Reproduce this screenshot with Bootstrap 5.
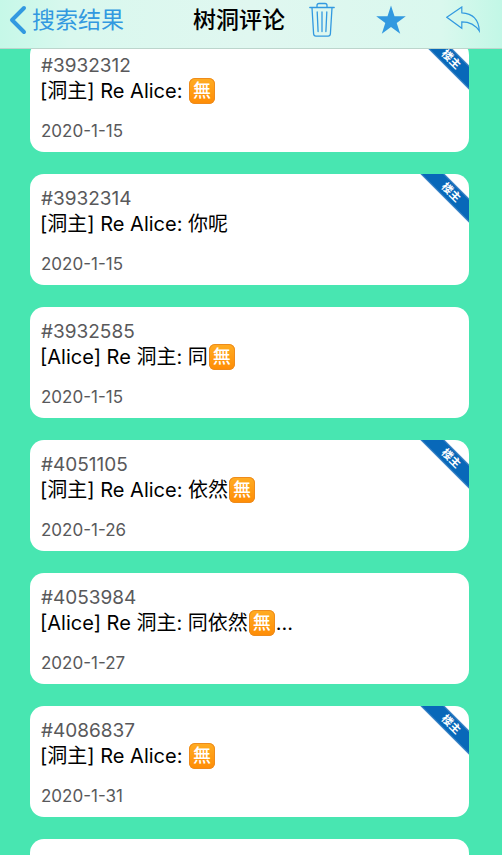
<!DOCTYPE html>
<html lang="zh-CN">
<head>
<meta charset="utf-8">
<meta name="viewport" content="width=device-width, initial-scale=1">
<title>树洞评论</title>
<link href="https://cdn.jsdelivr.net/npm/bootstrap@5.3.0/dist/css/bootstrap.min.css" rel="stylesheet">
<style>
  body { background: #48e6b1; color: #000; font-family: Inter, "Noto Sans CJK SC", sans-serif; }
  .topbar { height: 49px; padding-bottom: 9px; background: linear-gradient(90deg, #c6f8e8 0, #d9f8ee 14%, #e0f7f0 50%, #daf8ee 88%, #c2f7e6 100%); border-bottom: 1px solid #bcd5cc; }
  .topbar a, .topbar button { color: #3299e0; }
  .back { font-size: 23px; line-height: 32px; gap: 5px; padding-left: 9px; }
  .heading { font-size: 23px; line-height: 32px; font-weight: 500; color: #000; }
  .actions { width: 217px; padding: 0 22px 0 24px; }
  .feed { padding: 41px 33px 0 30px; gap: 22px; scrollbar-width: none; }
  .feed::-webkit-scrollbar { display: none; }
  .post { min-height: 111px; padding: 13px 11px 9px; border-radius: 14px; flex: none; }
  .number { font-size: 19px; line-height: 24px; color: #59595b; }
  .message { font-size: 20px; line-height: 26px; margin: 0 -1px 15px; }
  .date { font-size: 17px; line-height: 24px; color: #59595b; }
  .wu { width: 26px; height: 26px; margin: 0 1px; border-radius: 6px; font-size: 18px; font-weight: 500; line-height: 26px; color: #fff; background: linear-gradient(#ffad23, #ff8c05); box-shadow: inset 0 0 0 1px #ee8b1c; }
  .ribbon { top: 10px; right: -32px; width: 100px; height: 17px; transform: rotate(45deg); background: #0868b9; border: solid #4688c8; border-width: 1px 0; color: #fff; font-size: 11px; font-weight: 700; line-height: 15px; text-align: center; }
</style>
<script src="https://cdn.jsdelivr.net/npm/bootstrap@5.3.0/dist/js/bootstrap.bundle.min.js"></script>
</head>
<body>
<header class="topbar fixed-top d-flex align-items-center">
  <div class="flex-fill d-flex align-items-center justify-content-between">
    <a class="back d-flex align-items-center text-decoration-none" href="#results">
      <svg width="18" height="30" viewBox="0 0 18 30" fill="none" stroke="currentColor" stroke-width="4" stroke-linecap="round" stroke-linejoin="round" aria-hidden="true"><path d="M15 3 3 15l12 12"/></svg>
      <span>搜索结果</span>
    </a>
    <h1 class="heading m-0">树洞评论</h1>
  </div>
  <div class="actions d-flex align-items-center justify-content-between">
    <button class="btn p-0 border-0 d-flex" type="button" aria-label="删除">
      <svg width="26" height="36" viewBox="0 0 26 36" fill="none" stroke="currentColor" stroke-width="1.3" stroke-linejoin="round" stroke-linecap="round"><path d="M.8 5.5h24.4M8 5.2V3.6C8 2.2 8.700 1.500 10 1.500h6c1.300 0 2 .7 2 2.100v1.600M3 5.800l1.600 26c.1 1.500.9 2.300 2.300 2.300h12.200c1.400 0 2.200-.8 2.300-2.300l1.600-26M8.200 10l.9 19.500M13 10v19.500M17.800 10l-.9 19.500"/></svg>
    </button>
    <button class="btn p-0 border-0 d-flex" type="button" aria-label="收藏">
      <svg width="30" height="30" viewBox="0 0 30 30" fill="currentColor"><path d="m15 .5 3.500 10.700h11.300l-9.100 6.700 3.500 10.900L15 22.100l-9.200 6.700 3.500-10.900L.2 11.200h11.300z"/></svg>
    </button>
    <button class="btn p-0 border-0 d-flex" type="button" aria-label="回复">
      <svg width="34" height="27" viewBox="0 0 34 27" fill="none" stroke="currentColor" stroke-width="1.200" stroke-linejoin="miter"><path d="M.8 11.300 15.800 1v5.800c10.500.6 17 6.700 17.500 18.200-4-6.300-9.700-9.200-17.500-9.200v6.400z"/></svg>
    </button>
  </div>
</header>

<main class="feed vh-100 overflow-auto d-flex flex-column">
  <article class="post bg-white position-relative overflow-hidden">
    <div class="number">#3932312</div>
    <p class="message d-flex align-items-center"><span>[洞主] Re Alice:&nbsp;</span><span class="wu text-center">無</span></p>
    <time class="date d-block">2020-1-15</time>
    <span class="ribbon position-absolute">楼主</span>
  </article>
  <article class="post bg-white position-relative overflow-hidden">
    <div class="number">#3932314</div>
    <p class="message d-flex align-items-center"><span>[洞主] Re Alice: 你呢</span></p>
    <time class="date d-block">2020-1-15</time>
    <span class="ribbon position-absolute">楼主</span>
  </article>
  <article class="post bg-white position-relative overflow-hidden">
    <div class="number">#3932585</div>
    <p class="message d-flex align-items-center"><span>[Alice] Re 洞主: 同</span><span class="wu text-center">無</span></p>
    <time class="date d-block">2020-1-15</time>
  </article>
  <article class="post bg-white position-relative overflow-hidden">
    <div class="number">#4051105</div>
    <p class="message d-flex align-items-center"><span>[洞主] Re Alice: 依然</span><span class="wu text-center">無</span></p>
    <time class="date d-block">2020-1-26</time>
    <span class="ribbon position-absolute">楼主</span>
  </article>
  <article class="post bg-white position-relative overflow-hidden">
    <div class="number">#4053984</div>
    <p class="message d-flex align-items-center"><span>[Alice] Re 洞主: 同依然</span><span class="wu text-center">無</span><span>...</span></p>
    <time class="date d-block">2020-1-27</time>
  </article>
  <article class="post bg-white position-relative overflow-hidden">
    <div class="number">#4086837</div>
    <p class="message d-flex align-items-center"><span>[洞主] Re Alice:&nbsp;</span><span class="wu text-center">無</span></p>
    <time class="date d-block">2020-1-31</time>
    <span class="ribbon position-absolute">楼主</span>
  </article>
  <article class="post bg-white"></article>
</main>
</body>
</html>
